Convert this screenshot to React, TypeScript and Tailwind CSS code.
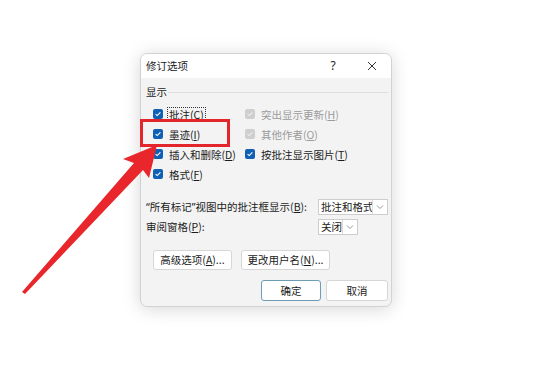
import React from "react";

const font = { fontFamily: '"Noto Sans CJK SC", "Noto Sans", sans-serif' };
const latin = { fontFamily: '"Noto Sans", "Liberation Sans", sans-serif' };

function Check({ disabled }: { disabled?: boolean }) {
  return (
    <span
      className={
        "w-[10px] h-[10px] rounded-[2px] flex items-center justify-center shrink-0 " +
        (disabled ? "bg-[#cfcfcf]" : "bg-[#1060b6]")
      }
    >
      <svg width="8" height="8" viewBox="0 0 8 8">
        <path d="M1.6 4.1 L3.2 5.6 L6.4 2.4" fill="none" stroke={disabled ? "#ededed" : "#ffffff"} strokeWidth="1.1" />
      </svg>
    </span>
  );
}

function Row({ children }: { children: React.ReactNode }) {
  return <div className="h-[20px] flex items-center">{children}</div>;
}

function Item({ label, disabled, focus }: { label: React.ReactNode; disabled?: boolean; focus?: boolean }) {
  return (
    <div className="flex items-center">
      <Check disabled={disabled} />
      <span
        className={
          "ml-[4px] leading-[13px] whitespace-nowrap " +
          (disabled ? "text-[#9b9b9b] " : "text-[#1b1b1b] ") +
          (focus ? "border border-dotted border-[#333] px-[1px]" : "border border-transparent px-[1px]")
        }
      >
        {label}
      </span>
    </div>
  );
}

function Chevron() {
  return (
    <svg width="8" height="6" viewBox="0 0 8 6">
      <path d="M1 1.5 L4 4.5 L7 1.5" fill="none" stroke="#8a8a8a" strokeWidth="0.9" />
    </svg>
  );
}

export default function App() {
  return (
    <div className="relative w-[550px] h-[370px] bg-white overflow-hidden text-[10.5px] leading-[14px] text-[#1b1b1b]" style={font}>
      <div className="pt-[53px] pl-[140px]">
        <div className="w-[252px] h-[254px] rounded-[7px] border border-[#d2d2d2] bg-[#f3f3f3] shadow-[0_2px_18px_rgba(0,0,0,0.16)] overflow-hidden flex flex-col">
          <div className="h-[24px] bg-white flex items-center pl-[5px] shrink-0">
            <span className="flex-1">修订选项</span>
            <span className="w-[40px] text-center text-[12px]" style={latin}>?</span>
            <span className="w-[38px] flex justify-center">
              <svg width="10" height="10" viewBox="0 0 10 10">
                <path d="M1 1 L9 9 M9 1 L1 9" stroke="#333" strokeWidth="1" />
              </svg>
            </span>
          </div>
          <div className="flex-1 flex flex-col">
            <div className="mt-[7px] h-[14px] flex items-center pl-[5px] pr-[3px]">
              <span>显示</span>
              <span className="flex-1 h-px bg-[#dedede] ml-[1px]" />
            </div>
            <div className="mt-[5px] pl-[12px] flex flex-col">
              <Row>
                <div className="w-[92px]">
                  <Item focus label={<>批注(<u>C</u>)</>} />
                </div>
                <Item disabled label={<>突出显示更新(<u>H</u>)</>} />
              </Row>
              <Row>
                <div className="w-[92px]">
                  <Item label={<>墨迹(<u>I</u>)</>} />
                </div>
                <Item disabled label={<>其他作者(<u>O</u>)</>} />
              </Row>
              <Row>
                <div className="w-[92px]">
                  <Item label={<>插入和删除(<u>D</u>)</>} />
                </div>
                <Item label={<>按批注显示图片(<u>T</u>)</>} />
              </Row>
              <Row>
                <div className="w-[92px]">
                  <Item label={<>格式(<u>F</u>)</>} />
                </div>
              </Row>
            </div>
            <div className="mt-[15px] h-[16px] flex items-center pl-[5px]">
              <span className="w-[172px] whitespace-nowrap">
                <span style={latin}>“</span>所有标记<span style={latin}>”</span>视图中的批注框显示(<u>B</u>):
              </span>
              <div className="w-[70px] h-[16px] bg-white border border-[#cdcdcd] flex items-center">
                <span className="flex-1 pl-[2px] leading-[14px] whitespace-nowrap overflow-hidden">批注和格式</span>
                <span className="w-[15px] h-full border-l border-[#dcdcdc] flex items-center justify-center shrink-0">
                  <Chevron />
                </span>
              </div>
            </div>
            <div className="mt-[4px] h-[16px] flex items-center pl-[5px]">
              <span className="w-[172px] whitespace-nowrap">审阅窗格(<u>P</u>):</span>
              <div className="w-[40px] h-[16px] bg-white border border-[#cdcdcd] flex items-center">
                <span className="flex-1 pl-[2px] leading-[14px] whitespace-nowrap overflow-hidden">关闭</span>
                <span className="w-[15px] h-full border-l border-[#dcdcdc] flex items-center justify-center shrink-0">
                  <Chevron />
                </span>
              </div>
            </div>
            <div className="mt-[15px] flex pl-[12px] gap-[9px]">
              <div className="w-[79px] h-[20px] bg-white border border-[#d6d6d6] rounded-[3px] flex items-center justify-center whitespace-nowrap">
                高级选项(<u>A</u>)...
              </div>
              <div className="w-[89px] h-[20px] bg-white border border-[#d6d6d6] rounded-[3px] flex items-center justify-center whitespace-nowrap">
                更改用户名(<u>N</u>)...
              </div>
            </div>
            <div className="mt-[10px] flex justify-end pr-[3px] gap-[5px]">
              <div className="w-[60px] h-[21px] bg-white border-[1.5px] border-[#6f9cb5] rounded-[3px] flex items-center justify-center">
                确定
              </div>
              <div className="w-[62px] h-[21px] bg-white border border-[#d6d6d6] rounded-[3px] flex items-center justify-center">
                取消
              </div>
            </div>
          </div>
        </div>
      </div>

      <div className="absolute left-[140px] top-[119px] w-[90px] h-[28px] border-[3.5px] border-[#e3262b]" />

      <svg className="absolute left-0 top-0" width="550" height="370" viewBox="0 0 550 370">
        <polygon
          points="22,292 134,163 123,159 157,145 149,178 143,170 25,294"
          fill="#e8262b"
        />
      </svg>
    </div>
  );
}
